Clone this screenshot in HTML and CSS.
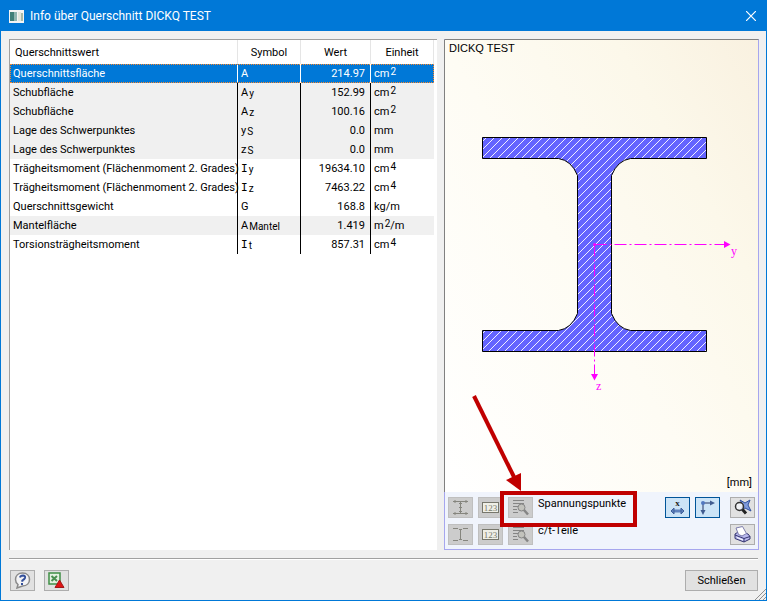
FILE: index.html
```html
<!DOCTYPE html>
<html lang="de">
<head>
<meta charset="utf-8">
<title>Info über Querschnitt DICKQ TEST</title>
<link rel="stylesheet" href="styles.css">
</head>
<body>
<div class="window">
  <header class="titlebar">
    <svg class="app-icon" width="15" height="13" viewBox="0 0 15 13" aria-hidden="true">
      <rect width="15" height="13" fill="#f4f4f4"/>
      <rect x="1" y="2" width="5" height="9" fill="#3f7f78"/>
      <rect x="5" y="2" width="3" height="9" fill="#8fb5b0"/>
      <rect x="9" y="2" width="3" height="9" fill="#e3e6dc"/>
      <rect x="12" y="3" width="2" height="8" fill="#a9b9a6"/>
    </svg>
    <h1 class="title">Info über Querschnitt DICKQ TEST</h1>
    <button class="close" type="button" aria-label="Schließen">
      <svg width="10" height="10" viewBox="0 0 10 10"><path d="M0 0L10 10M10 0L0 10" stroke="#fff" stroke-width="1.2"/></svg>
    </button>
  </header>

  <main class="content">
    <section class="values">
      <table class="grid">
        <colgroup><col><col class="col-symbol"><col class="col-value"><col class="col-unit"></colgroup>
        <thead>
          <tr><th>Querschnittswert</th><th>Symbol</th><th>Wert</th><th>Einheit</th></tr>
        </thead>
        <tbody>
          <tr class="selected"><td>Querschnittsfläche</td><td>A</td><td>214.97</td><td>cm<sup>2</sup></td></tr>
          <tr class="shaded"><td>Schubfläche</td><td>A<sub>y</sub></td><td>152.99</td><td>cm<sup>2</sup></td></tr>
          <tr class="shaded"><td>Schubfläche</td><td>A<sub>z</sub></td><td>100.16</td><td>cm<sup>2</sup></td></tr>
          <tr class="shaded"><td>Lage des Schwerpunktes</td><td>y<sub>S</sub></td><td>0.0</td><td>mm</td></tr>
          <tr class="shaded"><td>Lage des Schwerpunktes</td><td>z<sub>S</sub></td><td>0.0</td><td>mm</td></tr>
          <tr><td>Trägheitsmoment (Flächenmoment 2. Grades)</td><td><span class="serif-i">I</span><sub>y</sub></td><td>19634.10</td><td>cm<sup>4</sup></td></tr>
          <tr><td>Trägheitsmoment (Flächenmoment 2. Grades)</td><td><span class="serif-i">I</span><sub>z</sub></td><td>7463.22</td><td>cm<sup>4</sup></td></tr>
          <tr><td>Querschnittsgewicht</td><td>G</td><td>168.8</td><td>kg/m</td></tr>
          <tr class="shaded"><td>Mantelfläche</td><td>A<sub>Mantel</sub></td><td>1.419</td><td>m<sup>2</sup>/m</td></tr>
          <tr><td>Torsionsträgheitsmoment</td><td><span class="serif-i">I</span><sub>t</sub></td><td>857.31</td><td>cm<sup>4</sup></td></tr>
        </tbody>
      </table>
    </section>

    <section class="preview">
      <div class="canvas">
        <svg class="drawing" viewBox="445 40 313 452" role="img" aria-label="Querschnitt">
          <defs>
            <pattern id="hatch" width="8" height="8" patternUnits="userSpaceOnUse">
              <rect width="8" height="8" fill="#6464ff"/>
              <path d="M-1 9L9 -1M-1 1L1 -1M7 9L9 7" stroke="#f0f0ff" stroke-width="1"/>
            </pattern>
          </defs>
          <path d="M482.500 137.500H706.500V158.500H630.500Q617.500 160.500 611.500 175.500V313.500Q617.500 328.500 630.500 330.500H706.500V351.500H482.500V330.500H558.500Q571.500 328.500 577.500 313.500V175.500Q571.500 160.500 558.500 158.500H482.500Z" fill="url(#hatch)" stroke="#000"/>
          <g stroke="#f0f" stroke-dasharray="12 3 2 3">
            <path d="M594.500 244.500H724"/><path d="M594.500 244.500V374"/>
          </g>
          <circle cx="594.500" cy="244.500" r="1.500" fill="#f0f"/>
          <path d="M724 241L730.500 244.500L724 248ZM591 374H598L594.500 380.500Z" fill="#f0f"/>
          <g class="axis-label"><text x="731" y="255">y</text><text x="596" y="390">z</text></g>
        </svg>
        <span class="section-name">DICKQ TEST</span>
        <span class="dimension">[mm]</span>
      </div>

      <div class="tools">
        <div class="tool-row">
          <button class="tool disabled" type="button" disabled aria-label="Spannungspunkte anzeigen">
            <svg width="17" height="17" viewBox="0 0 17 17"><path d="M1 2.500H16M1 14.500H16M8.500 2V15M3 1V4M14 1V4M3 13V16M14 13V16M7 4.500H10M7 8.500H10M7 12.500H10" fill="none" stroke="#85857e"/></svg>
          </button>
          <button class="tool disabled" type="button" disabled aria-label="Nummerierung der Spannungspunkte">
            <svg width="17" height="11" viewBox="0 0 17 11"><rect x=".5" y=".5" width="16" height="10" fill="#efefe6" stroke="#77776c"/><text class="digits" x="8.500" y="9">123</text></svg>
          </button>
          <button class="tool disabled" type="button" disabled aria-label="Details der Spannungspunkte">
            <svg width="17" height="17" viewBox="0 0 17 17"><path d="M1 1.500H12M1 4.500H12M1 7.500H6M1 10.500H5M1 13.500H6" stroke="#858585"/><circle cx="9.500" cy="8.500" r="3.500" fill="#c2c2bc" stroke="#858585"/><path d="M12 11L16 15.500" stroke="#858585" stroke-width="2.500"/></svg>
          </button>
          <span class="tool-label">Spannungspunkte</span>
          <button class="tool active" type="button" aria-label="Bemaßung anzeigen">
            <svg width="17" height="19" viewBox="0 -1 17 19"><text class="x-mark" x="8.500" y="7">x</text><path d="M4 12H13" stroke="#5f82bd" stroke-width="3"/><path d="M5 9L2 12L5 15ZM12 9L15 12L12 15Z" fill="#5f82bd" stroke="#3f5f99"/></svg>
          </button>
          <button class="tool active" type="button" aria-label="Achsen anzeigen">
            <svg width="17" height="17" viewBox="0 0 17 17"><path d="M4 4H13M4 4V13" fill="none" stroke="#5b6e95" stroke-width="1.500"/><circle cx="4" cy="4" r="2" fill="#5279c0"/><path d="M11 1.500L16 4L11 6.500ZM1.500 11H6.500L4 16Z" fill="#415c90"/></svg>
          </button>
          <button class="tool last" type="button" aria-label="Ansicht zurücksetzen">
            <svg width="19" height="17" viewBox="0 0 19 17"><path d="M7 1L12 4L17 1L15 6L18 12L12 9L8 11L10 6Z" fill="#7f9bdc" stroke="#2f4f9c"/><circle cx="6.500" cy="7.500" r="4" fill="#f4f6fa" fill-opacity=".8" stroke="#333" stroke-width="1.500"/><path d="M9.500 10.500L13 14.500" stroke="#222" stroke-width="3"/></svg>
          </button>
        </div>
        <div class="tool-row">
          <button class="tool disabled" type="button" disabled aria-label="c/t-Teile anzeigen">
            <svg width="17" height="17" viewBox="0 0 17 17"><path d="M1 2.500H6M11 2.500H16M1 14.500H6M11 14.500H16M8.500 4V13M7 3.500H10M7 13.500H10" stroke="#85857e"/></svg>
          </button>
          <button class="tool disabled" type="button" disabled aria-label="Nummerierung der c/t-Teile">
            <svg width="17" height="11" viewBox="0 0 17 11"><rect x=".5" y=".5" width="16" height="10" fill="#efefe6" stroke="#77776c"/><text class="digits" x="8.500" y="9">123</text></svg>
          </button>
          <button class="tool disabled" type="button" disabled aria-label="Details der c/t-Teile">
            <svg width="17" height="17" viewBox="0 0 17 17"><path d="M1 1.500H12M1 4.500H12M1 7.500H6M1 10.500H5M1 13.500H6" stroke="#858585"/><circle cx="9.500" cy="8.500" r="3.500" fill="#c2c2bc" stroke="#858585"/><path d="M12 11L16 15.500" stroke="#858585" stroke-width="2.500"/></svg>
          </button>
          <span class="tool-label">c/t-Teile</span>
          <button class="tool last" type="button" aria-label="Drucken">
            <svg width="17" height="17" viewBox="0 0 17 17"><path d="M1 8L5 5.500L14 8L16 10.500V13L10 16L1 12.500Z" fill="#b9b9ee" stroke="#34346f"/><path d="M4.500 8.500L2 2L8.500 .5L12.500 7.500L8 10Z" fill="#fff" stroke="#7c7cac"/><path d="M1 9L10 12.500L16 10.500M10 12.500V16" fill="none" stroke="#34346f"/><path d="M3 11.500L9 14" stroke="#fff"/></svg>
          </button>
        </div>
      </div>

      <svg class="callout" width="137" height="132" viewBox="500 395 137 132" aria-hidden="true">
        <rect x="502" y="493" width="133" height="32" fill="none" stroke="#c00000" stroke-width="4"/>
        <path d="M474 396L514 477" stroke="#c00000" stroke-width="4"/>
        <path d="M506 480L521 473L521 491Z" fill="#c00000"/>
      </svg>
    </section>
  </main>

  <footer class="footer">
    <button class="tool" type="button" aria-label="Hilfe">
      <svg width="17" height="17" viewBox="0 0 17 17"><path d="M8.500 1C13 1 15.500 4 15.500 7.500S13 14 8.500 14L3 16L4 12.500C2 11 1.500 9.500 1.500 7.500C1.500 4 4 1 8.500 1Z" fill="#f3f3f5" stroke="#8a8a8a" stroke-width="1.500"/><path d="M6 5.500Q6.500 3.500 9 3.500Q11.500 3.700 11 5.800Q10.500 7.200 8.300 8.500V9.800M8 11V13" fill="none" stroke="#34509a" stroke-width="2"/></svg>
    </button>
    <button class="tool" type="button" aria-label="Excel-Export">
      <svg width="17" height="17" viewBox="0 0 17 17"><rect x="1" y="1" width="11" height="11" fill="#e4f1e1" stroke="#3f8f46" stroke-width="1.500"/><path d="M3.500 4L9 9M9 4L3.500 9" stroke="#4a8f50" stroke-width="2"/><path d="M11.500 8L16 15.500H7Z" fill="#e01414" stroke="#a01818"/></svg>
    </button>
    <button class="push" type="button">Schließen</button>
  </footer>
  <svg class="grip" width="11" height="11" viewBox="0 0 11 11" aria-hidden="true"><path d="M0 11L11 0M4 11L11 4M8 11L11 8" stroke="#8f8f8f"/></svg>
</div>
</body>
</html>
```
FILE: styles.css
```css
* { box-sizing: border-box; }

body {
  margin: 0;
  font-family: Roboto, "Liberation Sans", sans-serif;
  font-size: 11px;
  color: #000;
}

button { font: inherit; color: inherit; padding: 0; margin: 0; }
svg { display: block; }

.window {
  position: relative;
  display: flex;
  flex-direction: column;
  min-height: 100vh;
  background: #f0f0f0;
  border: 1px solid #0078d7;
}

.titlebar {
  display: flex;
  align-items: center;
  height: 30px;
  padding: 0 7px 0 8px;
  background: #0078d7;
  color: #fff;
}
.title {
  flex: 1;
  margin: 0 0 0 6px;
  font-size: 12px;
  font-weight: normal;
  line-height: 16px;
}
.close {
  display: grid;
  place-items: center;
  width: 16px;
  height: 24px;
  border: 0;
  background: none;
}

.content {
  flex: 1;
  display: grid;
  grid-template-columns: 428fr 315fr;
  gap: 7px;
  margin: 8px 7px 0 8px;
}

.values {
  background: #fff;
  border-top: 1px solid #a0a0a0;
  border-left: 1px solid #a0a0a0;
  padding-right: 3px;
}

.grid {
  width: 100%;
  table-layout: fixed;
  border-collapse: separate;
  border-spacing: 0;
}
.col-symbol { width: 63px; }
.col-value { width: 70px; }
.col-unit { width: 63px; }

.grid th {
  height: 24px;
  padding: 0;
  font-weight: normal;
  text-align: center;
  border-right: 1px solid #e5e5e5;
}
.grid th:first-child { text-align: left; padding-left: 5px; }

.grid td {
  height: 19px;
  padding: 1px 3px 0;
  line-height: 18px;
  white-space: nowrap;
  border-right: 1px solid #000;
}
.grid td:last-child { border-right: 0; }
.grid td:nth-child(3) { padding-right: 5px; text-align: right; }
.grid td:first-child { padding-right: 0; }

.shaded { background: #f0f0f0; }
.selected { background: #0078d7; color: #fff; outline: 1px dotted #ff8728; outline-offset: -1px; }
.selected td { border-right-color: #fff; }

.grid sub, .grid sup { margin-left: 1px; line-height: 0; font-size: 10px; }
.grid sub { vertical-align: -1px; }
.grid sup { vertical-align: 2px; }
.serif-i { font-family: "DejaVu Sans Mono", monospace; line-height: 0; }

.preview {
  position: relative;
  display: flex;
  flex-direction: column;
  border: 1px solid #a6a6ee;
  border-top-color: #808080;
}

.canvas {
  position: relative;
  flex: 1;
  border-left: 1px solid #808080;
  margin-left: -1px;
  background: linear-gradient(60deg, #fff 0%, #fefcf4 45%, #fcf8ea 75%, #f9f1e0 100%);
}
.drawing { width: 100%; }
.axis-label { font: 12px "Liberation Serif", serif; fill: #f0f; }
.section-name {
  position: absolute;
  top: 2px;
  left: 4px;
  font: 11px/13px "Liberation Sans", sans-serif;
}
.dimension { position: absolute; right: 6px; bottom: 3px; }

.tools {
  display: flex;
  flex-direction: column;
  gap: 6px;
  padding: 5px 3px 4px;
  background: #f0f4fc;
}
.tool-row { display: flex; gap: 5px; }
.tool-label { flex: 1; line-height: 14px; }

.tool {
  display: grid;
  place-items: center;
  width: 25px;
  height: 21px;
  background: #e1e1e1;
  border: 1px solid #adadad;
}
.tool.disabled { background: #ccc; border-color: #bfbfbf; }
.tool.active { background: #cce4f7; border-color: #005499; }
.tool.active + .last { margin-left: 5px; }
.digits { font: 9px "Liberation Serif", serif; fill: #77776c; text-anchor: middle; }
.x-mark { font: bold 9px "Liberation Serif", serif; fill: #222; text-anchor: middle; }

.callout {
  position: absolute;
  right: 121px;
  bottom: 22px;
  overflow: visible;
}

.footer {
  display: flex;
  align-items: flex-start;
  gap: 9px;
  margin: 8px 8px 0;
  padding: 11px 0 9px 1px;
  border-top: 1px solid #a0a0a0;
  box-shadow: inset 0 1px #fff;
}
.push {
  width: 73px;
  height: 21px;
  margin-left: auto;
  background: #e1e1e1;
  border: 1px solid #adadad;
}

.grip { position: absolute; right: 0; bottom: 0; }
```
